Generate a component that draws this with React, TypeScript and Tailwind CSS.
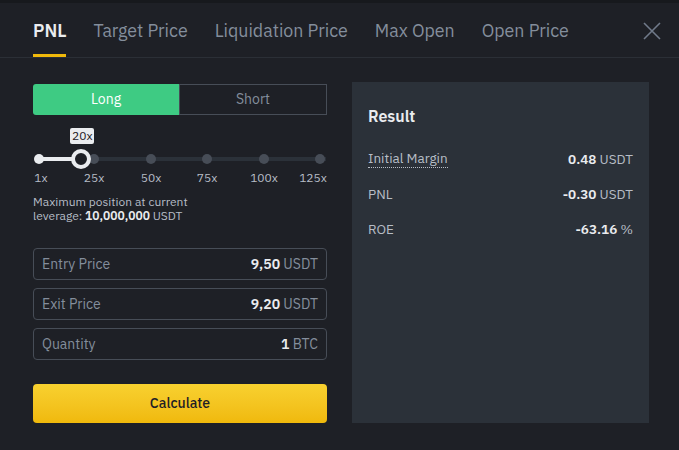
import clsx from 'clsx'

const TABS = ['PNL', 'Target Price', 'Liquidation Price', 'Max Open', 'Open Price']

const MARKS = [
  { label: '1x', left: 0 },
  { label: '25x', left: 55 },
  { label: '50x', left: 112 },
  { label: '75x', left: 168 },
  { label: '100x', left: 225 },
  { label: '125x', left: 281 }
]

const FIELDS = [
  { label: 'Entry Price', value: '9,50', unit: 'USDT' },
  { label: 'Exit Price', value: '9,20', unit: 'USDT' },
  { label: 'Quantity', value: '1', unit: 'BTC' }
]

const RESULTS = [
  { label: 'Initial Margin', value: '0.48', unit: 'USDT', dotted: true },
  { label: 'PNL', value: '-0.30', unit: 'USDT' },
  { label: 'ROE', value: '-63.16', unit: '%' }
]

const Tabs = () => {
  return (
    <div className="flex items-stretch h-[55px] border-b border-[#2b2f36] pl-[33px] pr-[18px]">
      <div className="flex flex-1 gap-[27px]">
        {TABS.map((t, i) => (
          <div
            key={t}
            className={clsx('flex items-center pt-[2px] text-[17.8px] relative', {
              'text-[#eaecef] font-semibold': i === 0,
              'text-[#848e9c]': i !== 0
            })}
          >
            {t}
            {i === 0 && <div className="absolute left-0 right-0 bottom-[0px] h-[3px] bg-[#f0b90b]" />}
          </div>
        ))}
      </div>
      <div className="flex items-center pt-[1px]">
        <svg width="18" height="18" viewBox="0 0 18 18" className="text-[#707a8a]">
          <path d="M1 1L17 17M17 1L1 17" stroke="currentColor" strokeWidth="1.6" />
        </svg>
      </div>
    </div>
  )
}

const Leverage = () => {
  return (
    <div className="mt-[11px]">
      <div className="relative h-[52px] w-[289px] ml-[4px]">
        <div className="absolute left-[33px] top-[2px] bg-[#eaecef] text-[#1e2026] text-[12px] leading-[16px] px-[2px] rounded-[2px]">
          20x
        </div>
        <div className="absolute left-0 right-0 top-[31px] h-[4px] bg-[#2b3139]" />
        <div className="absolute left-0 w-[43px] top-[31px] h-[4px] bg-[#eaecef]" />
        {MARKS.map((m, i) => (
          <div
            key={m.label}
            className={clsx('absolute top-[28px] w-[10px] h-[10px] rounded-full -ml-[5px]', {
              'bg-[#eaecef]': i === 0,
              'bg-[#474d57]': i !== 0
            })}
            style={{ left: m.left + 2 }}
          />
        ))}
        <div className="absolute left-[34px] top-[23px] w-[20px] h-[20px] rounded-full border-[4px] border-[#eaecef] bg-[#1e2026]" />
        <div className="absolute left-0 right-0 top-[43px]">
          {MARKS.map((m, i) => (
            <span
              key={m.label}
              className="absolute text-[12px] text-[#b7bdc6] -translate-x-1/2"
              style={{ left: i === 0 ? 4 : i === 5 ? m.left - 5 : m.left + 2 }}
            >
              {m.label}
            </span>
          ))}
        </div>
      </div>
      <div className="mt-[17px] text-[12px] leading-[14px] text-[#b7bdc6]">
        <div>Maximum position at current</div>
        <div>
          leverage: <span className="text-[#eaecef] font-semibold">10,000,000</span> USDT
        </div>
      </div>
    </div>
  )
}

const Field = (props: { label: string; value: string; unit: string }) => {
  const { label, value, unit } = props
  return (
    <div className="h-[32px] flex items-center justify-between px-[8px] border border-[#474d57] rounded-[4px] text-[14px]">
      <span className="text-[#848e9c]">{label}</span>
      <span className="text-[#848e9c]">
        <span className="text-[#eaecef] font-semibold">{value}</span> {unit}
      </span>
    </div>
  )
}

const ResultPanel = () => {
  return (
    <div className="bg-[#2b3139] px-[16px] pt-[22px]">
      <div className="text-[16px] font-semibold text-[#eaecef]">Result</div>
      <div className="mt-[21px] flex flex-col gap-[15px] text-[13.5px]">
        {RESULTS.map(r => (
          <div key={r.label} className="flex justify-between items-center h-[20px]">
            <span
              className={clsx('text-[#b7bdc6]', {
                'border-b border-dotted border-[#b7bdc6] leading-[17px]': r.dotted
              })}
            >
              {r.label}
            </span>
            <span className="text-[#b7bdc6]">
              <span className="text-[#eaecef] font-semibold">{r.value}</span> {r.unit}
            </span>
          </div>
        ))}
      </div>
    </div>
  )
}

const App = () => {
  return (
    <div
      className="w-[679px] h-[450px] bg-[#1e2026] overflow-hidden flex flex-col"
      style={{ fontFamily: '"IBM Plex Sans", Inter, "Noto Sans", sans-serif' }}
    >
      <div className="h-[3px] bg-[#17191d]" />
      <Tabs />
      <div className="flex gap-[25px] pl-[33px] pr-[30px] pt-[24px] pb-[27px] flex-1">
        <div className="w-[294px] flex flex-col pt-[2px]">
          <div className="flex h-[31px] text-[14px]">
            <div className="flex-1 flex items-center justify-center bg-[#3ecb83] text-[#ffffff] rounded-l-[3px]">
              Long
            </div>
            <div className="flex-1 flex items-center justify-center border border-[#474d57] text-[#848e9c]">
              Short
            </div>
          </div>
          <Leverage />
          <div className="mt-[25px] flex flex-col gap-[8px]">
            {FIELDS.map(f => (
              <Field key={f.label} {...f} />
            ))}
          </div>
          <button className="mt-auto h-[39px] rounded-[4px] bg-gradient-to-b from-[#f8d12f] to-[#f0b90b] text-[#1e2026] text-[14px] font-medium">
            Calculate
          </button>
        </div>
        <div className="flex-1 flex flex-col">
          <ResultPanel />
          <div className="flex-1 bg-[#2b3139]" />
        </div>
      </div>
    </div>
  )
}

export default App
